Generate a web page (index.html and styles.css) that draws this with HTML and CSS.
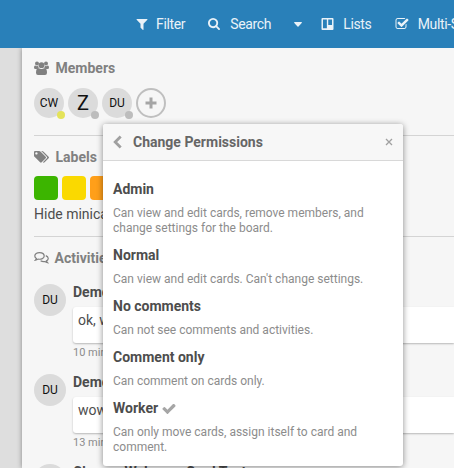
FILE: index.html
```html
<!DOCTYPE html>
<html lang="en">
<head>
<meta charset="utf-8">
<title>Board</title>
<link rel="stylesheet" href="styles.css">
</head>
<body>
<header class="topbar">
  <span class="tool filter"><svg viewBox="0 0 1792 1792"><path d="M1595 295q17 41-14 70l-493 493v742q0 42-39 59-13 5-25 5-27 0-45-19l-256-256q-19-19-19-45v-486l-493-493q-31-29-14-70 17-39 59-39h1280q42 0 59 39z"/></svg>Filter</span>
  <span class="tool search"><svg viewBox="64 128 1664 1664"><path d="M1216 832q0-185-131.500-316.500t-316.500-131.500-316.500 131.500-131.500 316.500 131.500 316.500 316.500 131.500 316.500-131.500 131.500-316.500zm512 832q0 52-38 90t-90 38q-54 0-90-38l-343-342q-179 124-399 124-143 0-273.500-55.500t-225-150-150-225-55.500-273.500 55.500-273.500 150-225 225-150 273.500-55.500 273.500 55.500 225 150 150 225 55.500 273.500q0 220-124 399l343 343q37 37 37 90z"/></svg>Search</span>
  <svg class="caret" viewBox="0 0 8 5"><path d="M.6 0h6.800q.9.300.3 1L4.500 4.600q-.5.500-1 0L.3 1Q-.2.300.6 0z"/></svg>
  <span class="tool lists"><svg viewBox="0 0 13 13"><path fill-rule="evenodd" d="M1 0h11q1 0 1 1v11q0 1-1 1H1q-1 0-1-1V1q0-1 1-1zM1.600 1.700v9.300h4.200V1.700zM7.300 1.700v6h4.100v-6z"/></svg>Lists</span>
  <span class="tool multi"><svg viewBox="0 0 1792 1792"><path d="M1472 930v318q0 119-84.500 203.500t-203.500 84.500h-832q-119 0-203.500-84.500t-84.500-203.500v-832q0-119 84.500-203.500t203.500-84.500h832q63 0 117 25 15 7 18 23 3 17-9 29l-49 49q-10 10-23 10-3 0-9-2-23-6-45-6h-832q-66 0-113 47t-47 113v832q0 66 47 113t113 47h832q66 0 113-47t47-113v-254q0-13 9-22l64-64q10-10 23-10 6 0 12 3 20 8 20 29zm231-489l-814 814q-24 24-57 24t-57-24l-430-430q-24-24-24-57t24-57l110-110q24-24 57-24t57 24l263 263 647-647q24-24 57-24t57 24l110 110q24 24 24 57t-24 57z"/></svg>Multi-Selection</span>
</header>
<main class="sidebar">
  <section class="members">
    <h3><svg class="icon" viewBox="0 0 15 14"><circle cx="3" cy="2.500" r="2"/><circle cx="12" cy="2.500" r="2"/><circle cx="7.500" cy="4.200" r="2.900"/><path d="M1.300 4.600Q3 5.600 4.100 4.700q.1 1.500.8 2.300Q3.600 7 2.900 8H1.500Q0 8 0 6.700 0 4.500 1.300 4.600zM13.700 4.600q-1.700 1-2.800.1-.1 1.500-.8 2.300 1.300 0 2 1h1.400Q15 8 15 6.700q0-2.200-1.300-2.100zM4.500 7.100q3 2 6 0 2.500.3 2.500 4.700 0 2.200-2 2.200H4q-2 0-2-2.200 0-4.400 2.500-4.700z"/></svg>Members</h3>
    <div class="avatars">
      <span class="avatar">CW<i class="dot online"></i></span>
      <span class="avatar single">Z<i class="dot"></i></span>
      <span class="avatar">DU<i class="dot"></i></span>
      <span class="avatar add"><svg viewBox="0 0 12 12"><path d="M4.500.5h3v4h4v3h-4v4h-3v-4h-4v-3h4z"/></svg></span>
    </div>
  </section>
  <section class="labels">
    <h3><svg class="icon" viewBox="0 0 15 13"><path fill-rule="evenodd" d="M0 1.500Q0 .5 1 .5h4q1 0 1.700.7l5 5q.8.800 0 1.600l-4 4q-.8.800-1.600 0l-5.300-5.200Q0 6 0 5zM2.400 1.700a1.200 1.200 0 1 0 .01 0z"/><path d="M7.200.5h.7q1 0 1.700.7l5 5q.8.800 0 1.600l-4 4q-.9.900-1.700 0l3.900-4q.8-.8 0-1.600z"/></svg>Labels</h3>
    <div class="swatches"><span class="green"></span><span class="yellow"></span><span class="orange"></span></div>
    <p>Hide minicard label text</p>
  </section>
  <section class="activities">
    <h3><svg class="icon" viewBox="0 0 15 13"><path class="line" d="M5.500 1.100C2.900 1.100.8 2.500.8 4.500q0 1.500 1.600 2.500-.2.900-1 1.700 1.500-.2 2.500-1.100c3.500.6 6.300-.8 6.300-3.100 0-2-2.100-3.400-4.700-3.400z"/><path class="line" d="M11.800 4.100c3.100 1.300 3.100 4 .7 5.300q.2.900 1 1.700-1.500-.2-2.500-1.100-2.600.4-4.400-.8"/></svg>Activities</h3>
    <article>
      <span class="avatar">DU</span>
      <div class="entry"><b>Demo User</b><div class="comment">ok, will do</div><time>10 minutes ago</time></div>
    </article>
    <article>
      <span class="avatar">DU</span>
      <div class="entry"><b>Demo User</b><div class="comment">wow</div><time>13 minutes ago</time></div>
    </article>
    <article>
      <span class="avatar">DU</span>
      <div class="entry"><b>Change Welcome Card Text</b></div>
    </article>
  </section>
</main>
<div class="popup">
  <div class="popup-head">
    <svg class="back" viewBox="0 0 9 14"><path d="M7.700 1.500 2.200 7l5.500 5.500"/></svg>
    <span>Change Permissions</span>
    <svg class="close" viewBox="0 0 8 8"><path d="m1 1 6 6m0-6L1 7"/></svg>
  </div>
  <ul>
    <li><b>Admin</b><p>Can view and edit cards, remove members, and change settings for the board.</p></li>
    <li><b>Normal</b><p>Can view and edit cards. Can't change settings.</p></li>
    <li><b>No comments</b><p>Can not see comments and activities.</p></li>
    <li><b>Comment only</b><p>Can comment on cards only.</p></li>
    <li><b>Worker <svg class="check" viewBox="100 230 1592 1300"><path d="M1671 566q0 40-28 68l-724 724-136 136q-28 28-68 28t-68-28l-136-136-362-362q-28-28-28-68t28-68l136-136q28-28 68-28t68 28l294 295 656-657q28-28 68-28t68 28l136 136q28 28 28 68z"/></svg></b><p>Can only move cards, assign itself to card and comment.</p></li>
  </ul>
</div>
</body>
</html>
```
FILE: styles.css
```css
* { box-sizing: border-box; }
body {
  margin: 0;
  height: 468px;
  overflow: hidden;
  background: #dedede;
  font: 14px/18px Roboto, sans-serif;
  color: #4d4d4d;
}
h3, p, ul { margin: 0; padding: 0; }
svg { fill: currentColor; flex: none; }

.topbar {
  position: relative;
  z-index: 1;
  height: 48px;
  background: #2980b9;
  color: #eaf2f8;
  display: flex;
  align-items: center;
  padding-left: 134.5px;
  font-size: 14px;
  letter-spacing: -.35px;
  white-space: nowrap;
  overflow: hidden;
}
.tool { display: flex; align-items: center; height: 18px; }
.tool svg { width: 14px; height: 14px; }
.filter { width: 52px; }
.filter svg { margin-right: 7.5px; }
.search { margin-left: 23px; width: 62px; }
.search svg { width: 12px; height: 12px; margin-right: 10px; }
.caret { width: 8px; height: 5px; margin-left: 24px; }
.lists { margin-left: 19px; width: 50px; }
.lists svg { width: 13px; height: 12px; margin-right: 9px; }
.multi { margin-left: 23.5px; }
.multi svg { margin-right: 9px; }

.sidebar {
  margin-left: 22px;
  height: 420px;
  padding: 11px 0 0 12px;
  background: #f6f6f6;
  box-shadow: 0 0 5px rgba(0, 0, 0, .4);
  overflow: hidden;
}
h3 {
  display: flex;
  align-items: center;
  height: 18px;
  font-size: 14px;
  font-weight: 700;
  color: #808080;
}
.icon { width: 15px; height: 14px; margin-right: 6.5px; }
.line { fill: none; stroke: currentColor; stroke-width: 1.2; }
.members { height: 77px; border-bottom: 1px solid #d4d4d4; }
.avatars { display: flex; gap: 4px; margin-top: 11px; }
.avatar {
  position: relative;
  flex: none;
  display: flex;
  align-items: center;
  justify-content: center;
  width: 30px;
  height: 30px;
  border-radius: 50%;
  background: #dbdbdb;
  color: #111;
  font-size: 12px;
}
.single { font-size: 20px; }
.dot {
  position: absolute;
  right: -1px;
  bottom: -1px;
  width: 8px;
  height: 8px;
  border-radius: 50%;
  background: #bdbdbd;
}
.online { background: #e4e35a; }
.add { background: none; border: 2px solid #bfbfbf; color: #a5a5a5; }
.add svg { width: 12px; height: 12px; }

.labels { height: 101px; padding-top: 12px; border-bottom: 1px solid #d4d4d4; }
.swatches { display: flex; gap: 4px; margin-top: 10px; }
.swatches span { width: 24px; height: 24px; border-radius: 4px; }
.green { background: #3cb500; }
.yellow { background: #fad900; }
.orange { background: #ff9f19; }
.labels p { margin-top: 5px; }

.activities { padding-top: 12px; }
.activities h3 { margin-bottom: 17px; }
.activities .icon { margin-right: 5.5px; }
article { display: flex; gap: 7px; height: 90px; }
article .avatar { width: 32px; height: 32px; }
.entry { flex: 1; min-width: 0; }
.entry b { display: block; height: 23px; line-height: 17px; }
.comment {
  height: 36px;
  padding: 4px 5px;
  border-radius: 3px 0 0 3px;
  background: #fff;
  box-shadow: 0 1px 2px rgba(0, 0, 0, .25);
}
time { display: block; padding-top: 1px; font-size: 11px; color: #8c8c8c; }

.popup {
  position: absolute;
  z-index: 2;
  left: 103px;
  top: 124px;
  width: 300px;
  height: 342px;
  border-radius: 3px;
  background: #fff;
  box-shadow: 0 1px 6px rgba(0, 0, 0, .45);
  overflow: hidden;
}
.popup-head {
  height: 37px;
  padding: 0 10px;
  display: flex;
  align-items: center;
  background: #f7f7f7;
  border-bottom: 1px solid #d8d8d8;
  color: #666;
  font-weight: 700;
}
.back, .close { fill: none; stroke: #a0a0a0; }
.back { width: 9px; height: 14px; margin-right: 11px; stroke-width: 2.8; }
.close { width: 8px; height: 8px; margin-left: auto; stroke-width: 1.3; }
.popup ul { list-style: none; padding: 19px 10px 0; }
.popup li { margin-bottom: 10px; }
.popup li b { display: block; height: 18px; }
.popup li p { margin-top: 8px; font-size: 12px; line-height: 15px; color: #8c8c8c; }
.check { width: 14px; height: 11px; color: #a6a6a6; vertical-align: -1px; }
```
